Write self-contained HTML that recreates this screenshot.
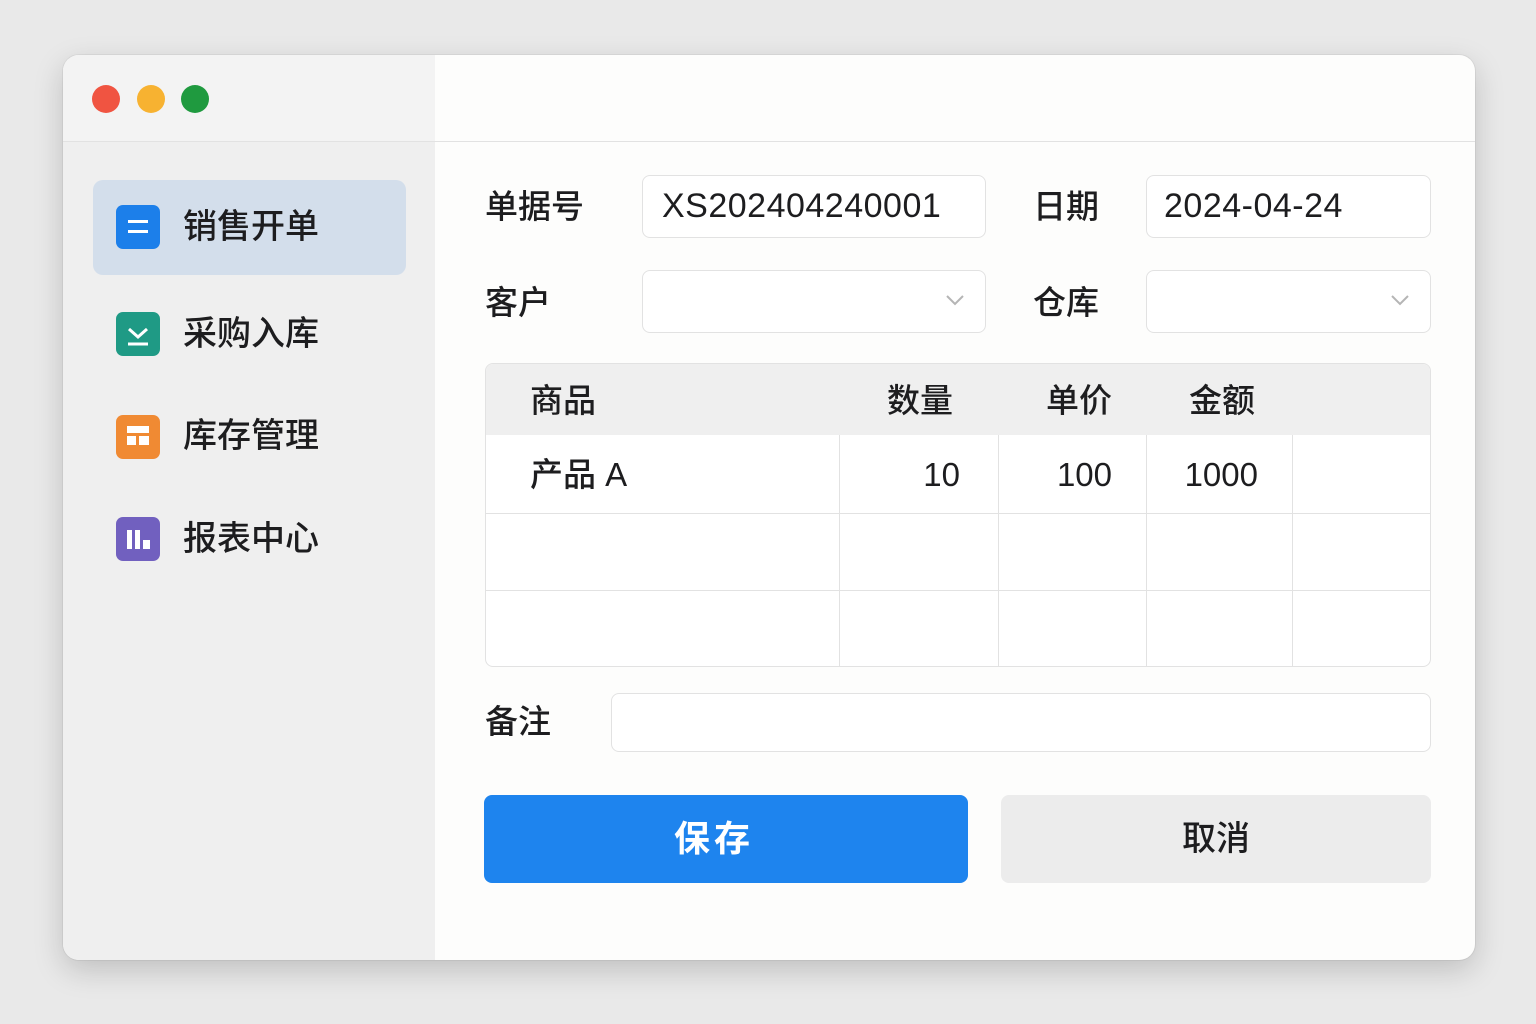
<!DOCTYPE html>
<html><head><meta charset="utf-8"><style>
*{margin:0;padding:0;box-sizing:border-box}
body{width:1536px;height:1024px;background:#e9e9e9;font-family:"Liberation Sans","Noto Sans CJK SC",sans-serif;color:#1d1d1f;position:relative;overflow:hidden}
.win{position:absolute;left:63px;top:55px;width:1412px;height:905px;border-radius:16px;background:#fdfdfc;overflow:hidden;box-shadow:0 10px 30px rgba(0,0,0,.18),0 0 0 1px rgba(0,0,0,.05)}
.side{position:absolute;left:0;top:0;width:372px;height:905px;background:#efefef}
.tb{position:absolute;left:0;top:86px;width:1412px;height:1px;background:#e2e2e2}
.dot{position:absolute;top:30px;width:28px;height:28px;border-radius:50%}
.a{position:absolute}
.item{position:absolute;left:120px;font-size:34px;line-height:40px;font-weight:500}
.ic{position:absolute;left:53px;width:44px;height:44px;border-radius:7px}
.lbl{position:absolute;font-size:33px;line-height:40px;font-weight:500}
.inp{position:absolute;background:#fff;border:1.5px solid #e2e2e2;border-radius:8px}
.val{position:absolute;font-size:34px;line-height:40px}
.chev{position:absolute;right:20px;top:22px}
.cell{position:absolute;font-size:33px;line-height:40px;font-weight:500}
</style></head><body>
<div class="win">
 <div class="side"></div>
 <div class="a" style="left:0;top:0;width:372px;height:86px;background:#f3f3f3"></div>
 <div class="tb"></div>
 <div class="dot" style="left:29px;background:#f05441"></div>
 <div class="dot" style="left:74px;background:#f7b231"></div>
 <div class="dot" style="left:118px;background:#1f9a3f"></div>

 <div class="a" style="left:30px;top:125px;width:313px;height:95px;border-radius:10px;background:#d3deeb"></div>
 <div class="ic" style="top:150px;background:#1c7fea"><div class="a" style="left:12px;top:15px;width:20px;height:3px;background:#fff"></div><div class="a" style="left:12px;top:25px;width:20px;height:3px;background:#fff"></div></div>
 <div class="item" style="top:152px">销售开单</div>
 <div class="ic" style="top:257px;background:#1f9a85"><svg class="a" style="left:0;top:0" width="44" height="44"><path d="M13 17l9 8 9-8" stroke="#fff" stroke-width="3" fill="none"/><path d="M12 32h20" stroke="#fff" stroke-width="3"/></svg></div>
 <div class="item" style="top:259px">采购入库</div>
 <div class="ic" style="top:360px;background:#f08a33"><div class="a" style="left:11px;top:11px;width:22px;height:7px;background:#fff"></div><div class="a" style="left:11px;top:21px;width:9px;height:9px;background:#fff"></div><div class="a" style="left:23px;top:21px;width:10px;height:9px;background:#fff"></div></div>
 <div class="item" style="top:361px">库存管理</div>
 <div class="ic" style="top:462px;background:#7160bf"><div class="a" style="left:11px;top:13px;width:5px;height:19px;background:#fff"></div><div class="a" style="left:19px;top:13px;width:5px;height:19px;background:#fff"></div><div class="a" style="left:27px;top:23px;width:7px;height:9px;background:#fff"></div></div>
 <div class="item" style="top:464px">报表中心</div>

 <div class="lbl" style="left:422px;top:132px">单据号</div>
 <div class="inp" style="left:579px;top:120px;width:344px;height:63px"><div class="val" style="left:19px;top:10px;letter-spacing:0.5px">XS202404240001</div></div>
 <div class="lbl" style="left:970px;top:132px">日期</div>
 <div class="inp" style="left:1083px;top:120px;width:285px;height:63px"><div class="val" style="left:17px;top:10px;letter-spacing:0.5px">2024-04-24</div></div>

 <div class="lbl" style="left:422px;top:228px">客户</div>
 <div class="inp" style="left:579px;top:215px;width:344px;height:63px"><svg class="chev" width="20" height="14"><path d="M2 3l8 8 8-8" stroke="#b5b5b5" stroke-width="2" fill="none"/></svg></div>
 <div class="lbl" style="left:970px;top:228px">仓库</div>
 <div class="inp" style="left:1083px;top:215px;width:285px;height:63px"><svg class="chev" width="20" height="14"><path d="M2 3l8 8 8-8" stroke="#b5b5b5" stroke-width="2" fill="none"/></svg></div>

 <div class="a" style="left:422px;top:308px;width:946px;height:304px;border:1.5px solid #e2e2e2;border-radius:8px;overflow:hidden;background:#fff">
  <div class="a" style="left:0;top:0;width:946px;height:71px;background:#efefef"></div>
  <div class="a" style="left:0;top:149px;width:946px;height:1px;background:#e2e2e2"></div>
  <div class="a" style="left:0;top:226px;width:946px;height:1px;background:#e2e2e2"></div>
  <div class="a" style="left:353px;top:71px;width:1px;height:240px;background:#e2e2e2"></div>
  <div class="a" style="left:512px;top:71px;width:1px;height:240px;background:#e2e2e2"></div>
  <div class="a" style="left:660px;top:71px;width:1px;height:240px;background:#e2e2e2"></div>
  <div class="a" style="left:806px;top:71px;width:1px;height:240px;background:#e2e2e2"></div>
  <div class="cell" style="left:44px;top:17px">商品</div>
  <div class="cell" style="left:401px;top:17px">数量</div>
  <div class="cell" style="left:560px;top:17px">单价</div>
  <div class="cell" style="left:703px;top:17px">金额</div>
  <div class="cell" style="left:44px;top:91px">产品 A</div>
  <div class="cell" style="right:470px;top:91px;font-weight:400">10</div>
  <div class="cell" style="right:318px;top:91px;font-weight:400">100</div>
  <div class="cell" style="right:172px;top:91px;font-weight:400">1000</div>
 </div>

 <div class="lbl" style="left:422px;top:647px">备注</div>
 <div class="inp" style="left:548px;top:638px;width:820px;height:59px"></div>

 <div class="a" style="left:421px;top:740px;width:484px;height:88px;border-radius:8px;background:#1e84ee;color:#fff;font-size:36px;line-height:88px;text-align:center;letter-spacing:4px;font-weight:700;padding-right:24px">保存</div>
 <div class="a" style="left:938px;top:740px;width:430px;height:88px;border-radius:8px;background:#ececec;font-size:34px;line-height:88px;text-align:center;font-weight:500">取消</div>
</div>
</body></html>
